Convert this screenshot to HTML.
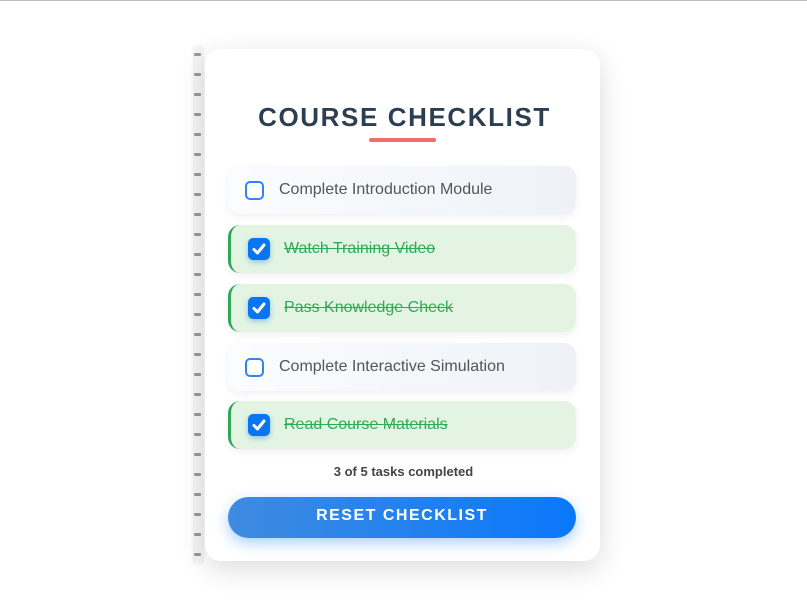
<!DOCTYPE html>
<html><head><style>
*{box-sizing:border-box;margin:0;padding:0}
body{width:807px;height:607px;background:#fff;font-family:"Liberation Sans",Arial,sans-serif;position:relative;overflow:hidden;border-top:1px solid #bbb}
.spine{position:absolute;left:193px;top:46px;width:9px;height:516px;background:#f4f4f4;box-shadow:1px 0 3px rgba(0,0,0,.1)}
.spine i{position:absolute;left:1px;width:7px;height:3px;background:#999;border-radius:1px}
.card{position:absolute;left:205px;top:48px;width:395px;height:512px;background:#fff;border-radius:16px;box-shadow:0 8px 28px rgba(0,0,0,.14)}
h1{position:absolute;left:0;right:0;top:101px;padding-left:2px;text-align:center;font-size:26px;letter-spacing:1.6px;color:#2c3e50;font-weight:bold}
.ul{position:absolute;left:369px;top:137px;width:67px;height:4px;background:#f36b6b;border-radius:2px}
.item{position:absolute;left:228px;width:348px;height:48px;border-radius:12px;background:linear-gradient(90deg,#fbfcfe,#eef2f7);box-shadow:0 3px 8px rgba(0,0,0,.06);font-size:16px;color:#555}
.item .cb{position:absolute;left:17px;top:15px;width:19px;height:19px;border:2px solid #2f86f0;border-radius:5px;background:#fff}
.item span{position:absolute;left:51px;top:15px}
.done{background:#e3f5e2;border-left:3px solid #2ea85a}
.done .cb{left:17px;top:13px;width:22px;height:22px;background:#0a75f0;border:none;box-shadow:0 2px 6px rgba(10,117,240,.4)}
.done span{left:53px;color:#2eaa55;text-decoration:line-through}
.stat{position:absolute;left:0;width:807px;top:463px;text-align:center;font-size:13px;font-weight:bold;color:#444}
.btn{position:absolute;left:228px;top:496px;width:348px;height:41px;border-radius:21px;background:linear-gradient(90deg,#3f8be0,#0a78fb);box-shadow:0 5px 14px rgba(10,120,250,.35);color:#fff;font-weight:bold;font-size:16px;letter-spacing:1.5px;text-align:center;line-height:38px}
</style></head><body>
<div class="spine">
<i style="top:6px"></i><i style="top:26px"></i><i style="top:46px"></i><i style="top:66px"></i><i style="top:86px"></i><i style="top:106px"></i><i style="top:126px"></i><i style="top:146px"></i><i style="top:166px"></i><i style="top:186px"></i><i style="top:206px"></i><i style="top:226px"></i><i style="top:246px"></i><i style="top:266px"></i><i style="top:286px"></i><i style="top:306px"></i><i style="top:326px"></i><i style="top:346px"></i><i style="top:366px"></i><i style="top:386px"></i><i style="top:406px"></i><i style="top:426px"></i><i style="top:446px"></i><i style="top:466px"></i><i style="top:486px"></i><i style="top:506px"></i>
</div>
<div class="card"></div>
<h1>COURSE CHECKLIST</h1>
<div class="ul"></div>
<div class="item" style="top:165px"><div class="cb"></div><span>Complete Introduction Module</span></div>
<div class="item done" style="top:224px"><div class="cb"><svg width="22" height="22" viewBox="0 0 22 22"><path d="M6 11.5l3.5 3.5 6.5-8" stroke="#fff" stroke-width="3" fill="none" stroke-linecap="round" stroke-linejoin="round"/></svg></div><span>Watch Training Video</span></div>
<div class="item done" style="top:283px"><div class="cb"><svg width="22" height="22" viewBox="0 0 22 22"><path d="M6 11.5l3.5 3.5 6.5-8" stroke="#fff" stroke-width="3" fill="none" stroke-linecap="round" stroke-linejoin="round"/></svg></div><span>Pass Knowledge Check</span></div>
<div class="item" style="top:342px"><div class="cb"></div><span>Complete Interactive Simulation</span></div>
<div class="item done" style="top:400px"><div class="cb"><svg width="22" height="22" viewBox="0 0 22 22"><path d="M6 11.5l3.5 3.5 6.5-8" stroke="#fff" stroke-width="3" fill="none" stroke-linecap="round" stroke-linejoin="round"/></svg></div><span>Read Course Materials</span></div>
<div class="stat">3 of 5 tasks completed</div>
<div class="btn">RESET CHECKLIST</div>
</body></html>
